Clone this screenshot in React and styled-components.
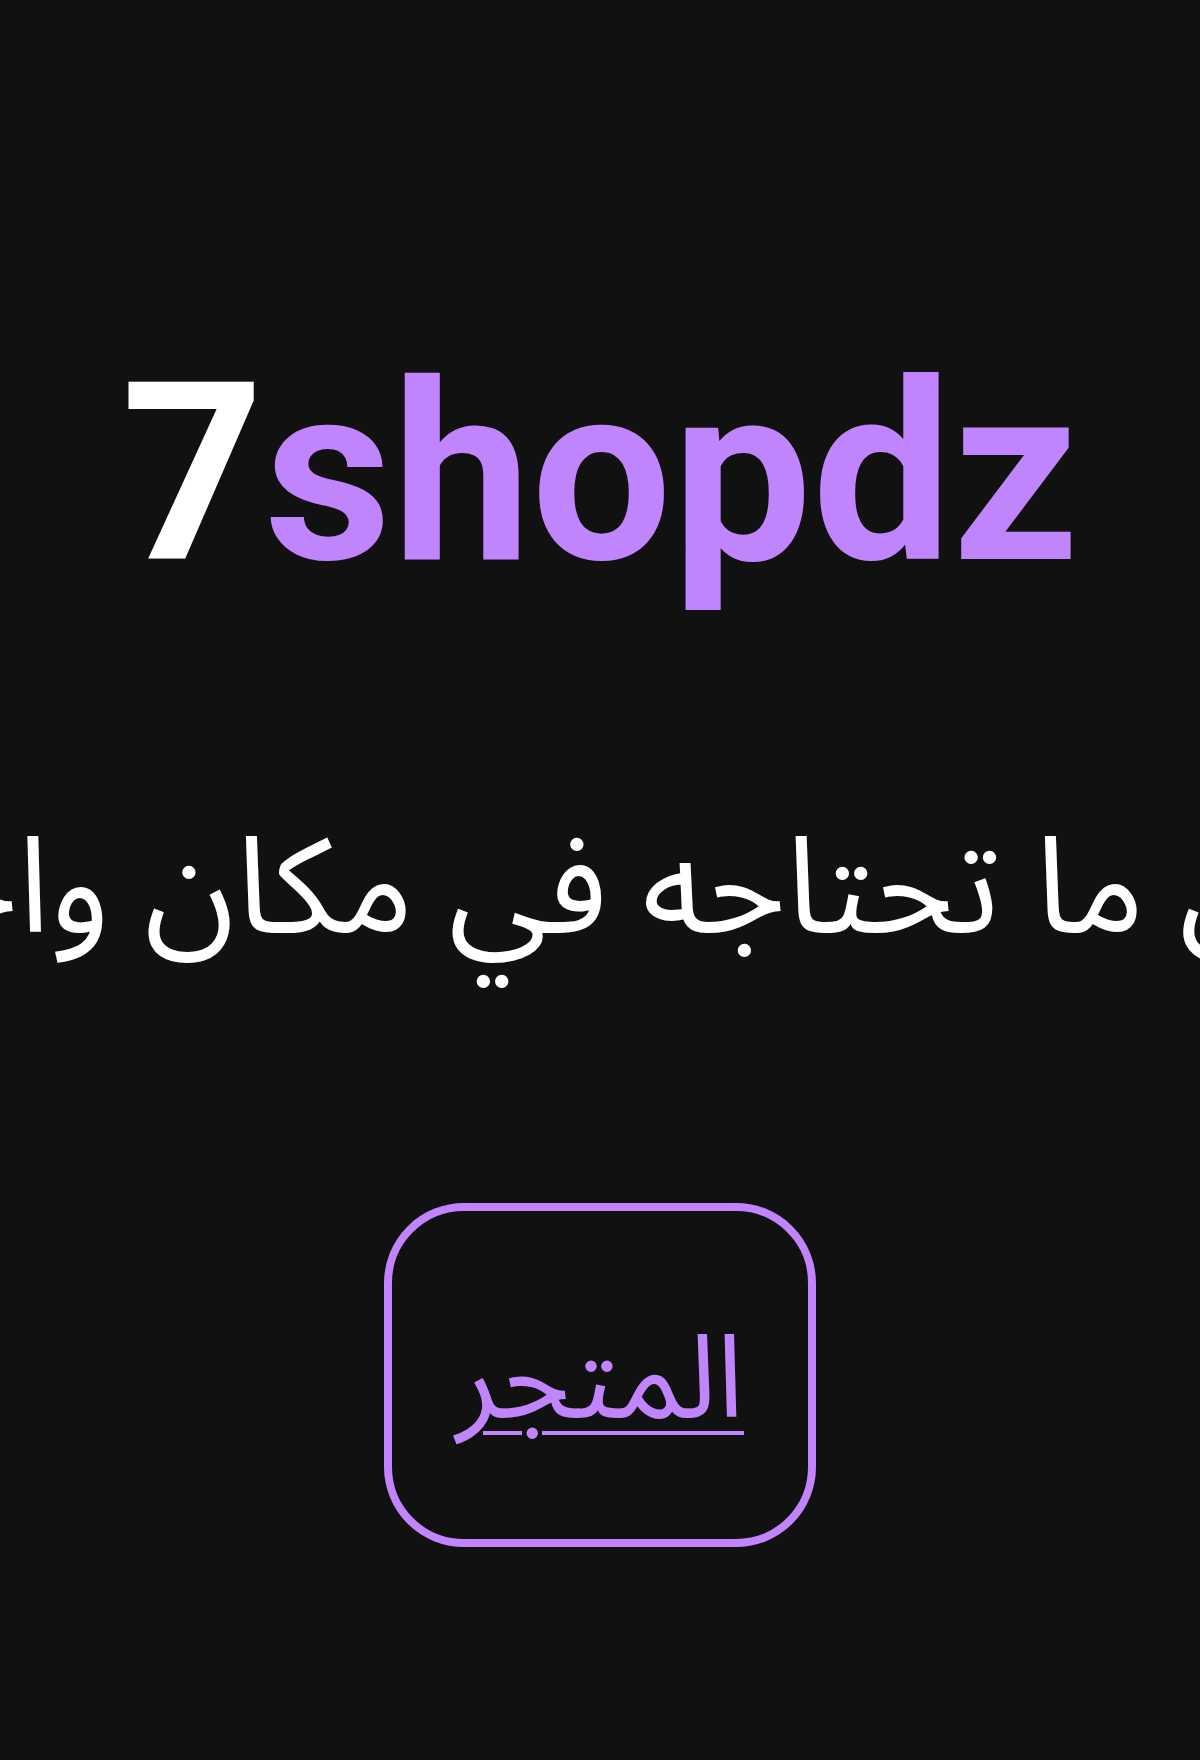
import React from "react";
import styled, { createGlobalStyle } from "styled-components";

const Global = createGlobalStyle`
  html, body { margin: 0; padding: 0; background: #111111; }
  body { font-family: "Roboto", "DejaVu Sans", sans-serif; overflow-x: hidden; }
`;

const arabic = `"Noto Sans Arabic", "Noto Kufi Arabic", "Noto Naskh Arabic", "DejaVu Sans", sans-serif`;

const Page = styled.main`
  min-height: 1760px;
  display: flex;
  flex-direction: column;
  align-items: center;
  padding-top: 350px;
  box-sizing: border-box;
  overflow: hidden;
`;

const Title = styled.h1`
  margin: 0;
  font-family: "Roboto", sans-serif;
  font-weight: 700;
  font-size: 249px;
  line-height: 1;
  color: #c084fc;
  white-space: nowrap;
`;

const Seven = styled.span`
  color: #ffffff;
`;

const Tagline = styled.p`
  margin: 224px 0 0;
  font-family: ${arabic};
  font-size: 134px;
  line-height: 1;
  color: #ffffff;
  white-space: nowrap;
  direction: rtl;
`;

const StoreButton = styled.a`
  margin-top: 246px;
  width: 432px;
  height: 344px;
  box-sizing: border-box;
  border: 8px solid #c084fc;
  border-radius: 80px;
  display: flex;
  align-items: center;
  justify-content: center;
  padding-top: 12px;
  font-family: ${arabic};
  font-size: 116px;
  line-height: 1;
  color: #c084fc;
  text-decoration: underline;
  text-decoration-thickness: 4px;
  text-underline-offset: 14px;
  direction: rtl;
`;

export default function App() {
  return (
    <>
      <Global />
      <Page>
        <Title>
          <Seven>7</Seven>shopdz
        </Title>
        <Tagline>كل ما تحتاجه في مكان واحد</Tagline>
        <StoreButton href="#">المتجر</StoreButton>
      </Page>
    </>
  );
}
